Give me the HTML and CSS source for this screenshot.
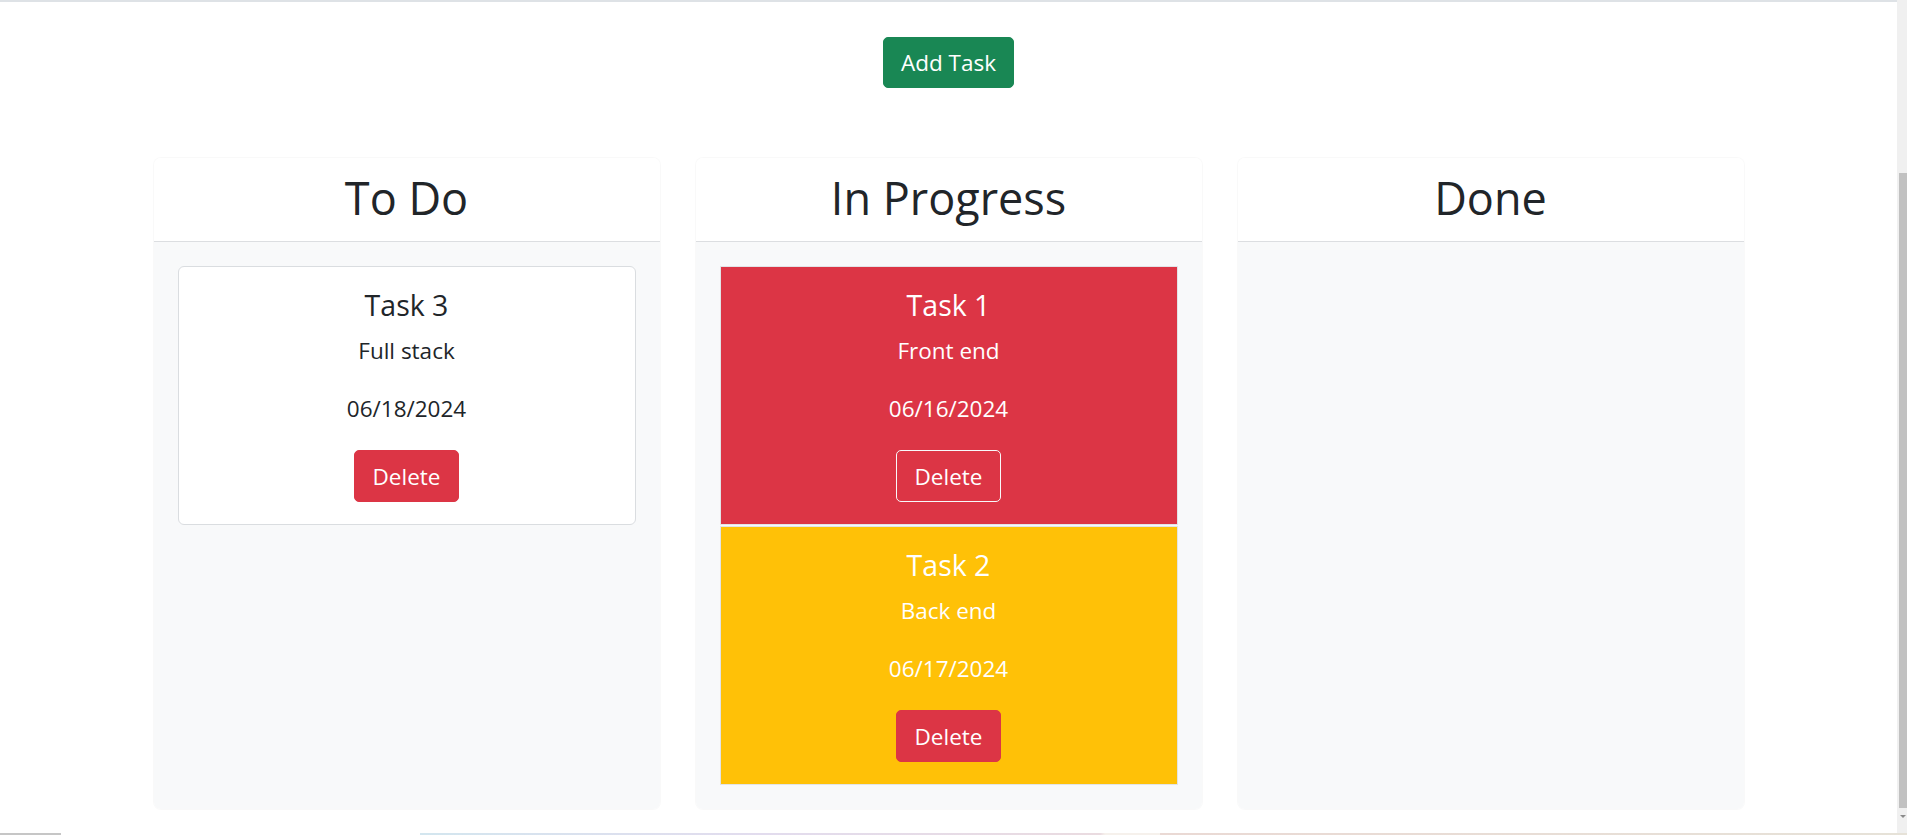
FILE: index.html
```html
<!DOCTYPE html>
<html lang="en">
<head>
<meta charset="utf-8">
<title>Task Board</title>
<link rel="stylesheet" href="styles.css">
</head>
<body>
<div class="window">
  <div class="viewport">
    <div class="page">
      <div class="topline"></div>
      <div class="toolbar">
        <button class="btn btn-success">Add Task</button>
      </div>
      <div class="board">
        <section class="column">
          <header class="column-header"><h2>To Do</h2></header>
          <div class="column-body">
            <div class="task">
              <div class="task-body">
                <h5 class="task-title">Task 3</h5>
                <p class="task-text">Full stack</p>
                <p class="task-date">06/18/2024</p>
                <button class="btn btn-danger">Delete</button>
              </div>
            </div>
          </div>
        </section>
        <section class="column">
          <header class="column-header"><h2>In Progress</h2></header>
          <div class="column-body">
            <div class="task task-danger">
              <div class="task-body">
                <h5 class="task-title">Task 1</h5>
                <p class="task-text">Front end</p>
                <p class="task-date">06/16/2024</p>
                <button class="btn btn-outline-light">Delete</button>
              </div>
            </div>
            <div class="task task-warning">
              <div class="task-body">
                <h5 class="task-title">Task 2</h5>
                <p class="task-text">Back end</p>
                <p class="task-date">06/17/2024</p>
                <button class="btn btn-danger">Delete</button>
              </div>
            </div>
          </div>
        </section>
        <section class="column">
          <header class="column-header"><h2>Done</h2></header>
          <div class="column-body"></div>
        </section>
      </div>
    </div>
    <div class="scrollbar">
      <div class="thumb"></div>
      <div class="arrow"></div>
    </div>
  </div>
  <div class="taskbar"></div>
</div>
</body>
</html>
```

FILE: styles.css
```css
* { box-sizing: border-box; }

html, body {
  margin: 0;
  padding: 0;
  background: #ffffff;
}

body {
  font-family: "Open Sans", "Noto Sans", sans-serif;
  color: #212529;
  font-size: 22.5px;
  line-height: 33px;
}

.window {
  height: 835px;
  display: flex;
  flex-direction: column;
  overflow: hidden;
}

.viewport {
  flex: 1;
  display: flex;
  min-height: 0;
}

.page {
  flex: 1;
  display: flex;
  flex-direction: column;
}

.topline {
  height: 2px;
  background: #dee2e6;
}

.toolbar {
  display: flex;
  justify-content: center;
  padding-top: 35px;
}

.btn {
  font-family: inherit;
  font-size: 22.5px;
  line-height: 33px;
  padding: 8.5px 18px;
  border: 1px solid transparent;
  border-radius: 5px;
  color: #ffffff;
  cursor: pointer;
}

.toolbar .btn {
  padding: 8px 17px;
}

.btn-success {
  background: #198754;
  border-color: #198754;
}

.btn-danger {
  background: #dc3545;
  border-color: #dc3545;
}

.btn-outline-light {
  background: transparent;
  border-color: #f8f9fa;
}

.board {
  margin: 70px auto 0;
  display: grid;
  grid-template-columns: repeat(3, 506px);
  column-gap: 36px;
  align-items: stretch;
}

.column {
  display: flex;
  flex-direction: column;
  border-radius: 7px;
  box-shadow: 0 0 0 1px rgba(0, 0, 0, 0.025);
  overflow: hidden;
}

.column-header {
  background: #ffffff;
  border-bottom: 1px solid #dcdee1;
  padding: 13px 0 17px;
  text-align: center;
}

.column-header h2 {
  margin: 0;
  font-size: 45px;
  line-height: 53px;
  font-weight: 400;
}

.column-body {
  flex: 1;
  background: #f8f9fa;
  padding: 24px;
}

.task {
  height: 259px;
  border: 1px solid #dadde0;
  border-radius: 6px;
  background: #ffffff;
}

.task + .task {
  margin-top: 1px;
}

.task-danger,
.task-warning {
  border-color: #e2e4e7;
  border-radius: 0;
  color: #ffffff;
}

.task-danger { background: #dc3545; }
.task-warning { background: #ffc107; }

.task-body {
  padding: 22px;
  display: flex;
  flex-direction: column;
  align-items: center;
  text-align: center;
}

.task-title {
  margin: 0 0 12px;
  font-size: 28.5px;
  line-height: 33px;
  font-weight: 400;
}

.task-text,
.task-date {
  margin: 0 0 25px;
}

.scrollbar {
  width: 10px;
  background: #f0f0f0;
  display: flex;
  flex-direction: column;
  align-items: flex-end;
}

.thumb {
  margin-top: 173px;
  width: 8px;
  height: 635px;
  background: #c1c1c1;
}

.arrow {
  margin-top: 7px;
  margin-right: 1px;
  width: 0;
  height: 0;
  border-left: 3px solid transparent;
  border-right: 3px solid transparent;
  border-top: 3px solid #8a8a8a;
}

.taskbar {
  height: 2px;
  background: linear-gradient(90deg,
    #c6c6c6 0, #c6c6c6 61px,
    #ffffff 61px, #ffffff 420px,
    #d3e6ef 420px, #e2dcee 760px, #eadbe0 1100px,
    #f6f1ec 1105px, #f6f1ec 1160px,
    #ead9d4 1160px, #e6e2d8 1907px);
}
```
